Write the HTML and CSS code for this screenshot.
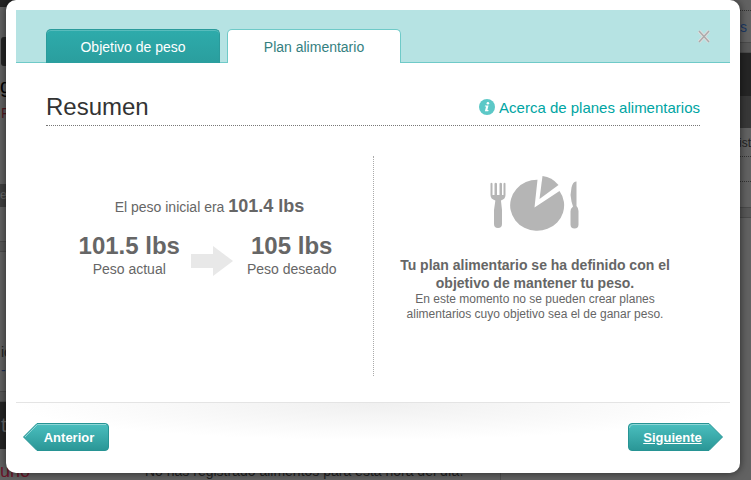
FILE: index.html
```html
<!DOCTYPE html>
<html lang="es">

<head>
    <meta charset="UTF-8">
    <meta name="viewport" content="width=device-width, initial-scale=1.0">
    <title>Plan alimentario</title>
    <link rel="stylesheet" href="styles.css">
</head>

<body>
    <!-- page behind the dialog -->
    <div class="page">
        <div class="page-main">
            <div class="row topbar"></div>
            <div class="row profile">
                <div class="photo"></div>
                <div class="name">g</div>
                <div class="food">F</div>
            </div>
            <div class="row subnav">eg</div>
            <div class="row strip"></div>
            <div class="row gap"></div>
            <div class="row panel">
                <div>ic</div>
                <a href="#">-</a>
            </div>
            <div class="row gap"></div>
            <div class="row titlebar">t</div>
            <div class="row meal">
                <span class="meal-name">uno</span>
                <span>No has registrado alimentos para esta hora del día.</span>
            </div>
        </div>
        <div class="page-side">
            <div class="row dotted side-top"></div>
            <div class="row side-link"><a href="#">s</a></div>
            <div class="row gap"></div>
            <div class="row side-dark"></div>
            <div class="row side-box"></div>
            <div class="row dotted side-text">ist</div>
            <div class="row dotted side-item"></div>
            <div class="row side-item"></div>
            <div class="row gap"></div>
        </div>
    </div>

    <div class="overlay">
        <div class="modal" role="dialog" aria-label="Plan alimentario">
            <div class="modal-header">
                <button class="tab" type="button">Objetivo de peso</button>
                <button class="tab active" type="button">Plan alimentario</button>
                <button class="close" type="button" aria-label="Cerrar">
                    <svg width="12" height="13" viewBox="0 0 12 13">
                        <path d="M1 1L11 12M11 1L1 12" stroke="#e6dcdc" stroke-width="3" />
                        <path d="M1 1L11 12M11 1L1 12" stroke="#aaa" stroke-width="1.4" />
                    </svg>
                </button>
            </div>

            <div class="content">
                <div class="heading">
                    <h1>Resumen</h1>
                    <a class="about" href="#">
                        <svg width="16" height="16" viewBox="0 0 16 16">
                            <circle cx="8" cy="8" r="8" fill="#5cc8c7" />
                            <circle cx="8.9" cy="4.3" r="1.3" fill="#fff" />
                            <path d="M6 6.500h3.500L8.400 11h1.200l-.4 1.200H5.900L7.100 7.600H5.800z" fill="#fff" />
                        </svg>
                        Acerca de planes alimentarios
                    </a>
                </div>

                <div class="summary">
                    <div class="weight">
                        <p class="initial">El peso inicial era <strong>101.4 lbs</strong></p>
                        <div class="compare">
                            <div class="value">
                                <strong>101.5 lbs</strong>
                                <span>Peso actual</span>
                            </div>
                            <svg class="arrow" width="42" height="30" viewBox="0 0 42 30">
                                <path d="M0 8h22V0l20 15-20 15v-8H0z" fill="#e8e8e8" />
                            </svg>
                            <div class="value">
                                <strong>105 lbs</strong>
                                <span>Peso deseado</span>
                            </div>
                        </div>
                    </div>
                    <div class="plan">
                        <svg class="plate" width="90" height="56" viewBox="0 0 90 56" fill="#b5b5b5">
                            <path d="M.5 7.5q1-1.5 2 0V19h2V7.5q1.200-1.500 2.500 0V19h2.500V7.500q1.200-1.500 2.500 0V19h1.500V7.500q1.200-1.500 2 0V19q0 4-4.500 5.500V25L12 34v14q0 4-4 4t-4-4V34l1.300-9v-.5Q.5 23 .5 19z" />
                            <path d="M47.500 3.800A27 25.500 0 1 0 69.500 15L44.500 31.500z" />
                            <path d="M52.500 0Q62 1 68.500 9L49.500 23z" />
                            <path d="M86.500 5.500q-3.500-.5-5 6-1.800 7 0 14l1.500 5q-2.500 2-2.500 5v13q0 4 4 4t4-4V35q0-3-2-5z" />
                        </svg>
                        <p class="plan-title">Tu plan alimentario se ha definido con el objetivo de mantener tu peso.</p>
                        <p class="plan-note">En este momento no se pueden crear planes alimentarios cuyo objetivo sea el de ganar peso.</p>
                    </div>
                </div>
            </div>

            <div class="modal-footer">
                <button class="nav prev" type="button">
                    <svg width="86" height="28" viewBox="0 0 86 28">
                        <defs>
                            <linearGradient id="teal" x1="0" y1="0" x2="0" y2="1">
                                <stop offset="0" stop-color="#4bbfbf" />
                                <stop offset="1" stop-color="#2a9696" />
                            </linearGradient>
                        </defs>
                        <path d="M.5 14L14 .5H82a3.500 3.500 0 0 1 3.500 3.500V24a3.500 3.500 0 0 1-3.500 3.500H14z" fill="url(#teal)" stroke="#279494" />
                        <path d="M2 14L14.500 1.500H83" fill="none" stroke="#8fd6d6" />
                    </svg>
                    <span>Anterior</span>
                </button>
                <button class="nav next" type="button">
                    <svg width="95" height="28" viewBox="0 0 95 28">
                        <path d="M94.500 14L81 .5H4A3.500 3.500 0 0 0 .5 4V24A3.500 3.500 0 0 0 4 27.500H81z" fill="url(#teal)" stroke="#279494" />
                        <path d="M1.500 5Q1.500 1.500 5 1.500H81" fill="none" stroke="#8fd6d6" />
                    </svg>
                    <span>Siguiente</span>
                </button>
            </div>
        </div>
    </div>
</body>

</html>
```
FILE: styles.css
```css
* {
    box-sizing: border-box;
}

body {
    margin: 0;
    min-height: 100vh;
    position: relative;
    overflow: hidden;
    background-color: #626262;
    color: #666;
    font-family: "Liberation Sans", Arial, sans-serif;
    font-size: 14px;
}

h1,
p {
    margin: 0;
}

button {
    padding: 0;
    border: none;
    background: none;
    font-family: inherit;
    cursor: pointer;
}

a {
    text-decoration: none;
}

/* page behind */
.page {
    display: flex;
    height: 100vh;
    overflow: hidden;
    color: #222;
}

.page-main {
    flex: 2;
    border-right: 1px solid #505050;
}

.page-side {
    flex: 1;
    background-color: #626262;
    text-align: right;
}

.row {
    overflow: hidden;
}

.gap {
    height: 11px;
    background-color: #585858;
    border-top: 1px solid #4b4b4b;
    border-bottom: 1px solid #4b4b4b;
}

.dotted {
    border-bottom: 1px dotted #333;
}

.topbar {
    height: 7px;
    background-color: #252525;
}

.profile {
    height: 177px;
    padding-top: 30px;
}

.photo {
    width: 60px;
    height: 29px;
    margin-left: 1px;
    border-radius: 3px;
    background-color: #252525;
}

.name {
    margin-top: 6px;
    color: #000;
    font-size: 20px;
    line-height: 28px;
}

.food {
    margin-top: 4px;
    padding-left: 1px;
    color: #501820;
    line-height: 18px;
}

.subnav {
    height: 23px;
    background-color: #404040;
    color: #686868;
    font-size: 12px;
    line-height: 22px;
}

.strip {
    height: 34px;
}

.panel {
    height: 139px;
    padding: 91px 0 0 1px;
    line-height: 18px;
}

.panel a {
    display: block;
    color: #1c2f55;
}

.titlebar {
    height: 47px;
    background-color: #252525;
    color: #666;
    font-size: 20px;
    line-height: 47px;
    padding-left: 1px;
}

.meal {
    display: flex;
    padding-top: 13px;
    line-height: 18px;
}

.meal-name {
    width: 145px;
    color: #6b1428;
    font-size: 18px;
}

.side-top {
    height: 11px;
}

.side-link {
    height: 31px;
    padding-right: 4px;
    line-height: 32px;
}

.side-link a {
    color: #1c3a68;
}

.side-dark {
    height: 43px;
    background-color: #252525;
}

.side-box {
    height: 32px;
    background-color: #383838;
}

.side-text {
    height: 29px;
    font-size: 12px;
    line-height: 30px;
}

.side-item {
    height: 25px;
}

/* dialog */
.overlay {
    position: absolute;
    inset: 0;
    padding: 0 11px 0 6px;
}

.modal {
    padding: 10px 10px 22px;
    border-radius: 10px;
    background-color: #fff;
    box-shadow: 0 0 8px rgba(0, 0, 0, 0.6);
}

.modal-header {
    display: flex;
    align-items: flex-end;
    gap: 7px;
    height: 53px;
    padding: 0 20px 0 30px;
    background-color: #b6e3e3;
    box-shadow: inset 0 -1px #6fcac8;
}

.tab {
    width: 174px;
    height: 34px;
    border: 1px solid #2a9b9b;
    border-bottom: none;
    border-radius: 5px 5px 0 0;
    background: linear-gradient(#2eabab, #2a9e9e);
    box-shadow: inset 0 1px #58bcbc;
    color: #fff;
    font-size: 14px;
}

.tab.active {
    border-color: #6fcac8;
    background: #fff;
    box-shadow: none;
    color: #35807f;
}

.close {
    align-self: center;
    height: 13px;
    margin-left: auto;
}

.close svg {
    display: block;
}

.content {
    padding: 29px 30px 26px;
}

.heading {
    display: flex;
    justify-content: space-between;
    align-items: center;
    height: 34px;
    padding-bottom: 3px;
    border-bottom: 1px dotted #777;
}

h1 {
    color: #333;
    font-size: 24px;
    font-weight: normal;
}

.about {
    display: flex;
    align-items: center;
    gap: 4px;
    color: #00a5a3;
    font-size: 15px;
}

.summary {
    display: grid;
    grid-template-columns: 1fr 1fr;
    height: 220px;
    margin-top: 30px;
}

.weight {
    padding-top: 38px;
    text-align: center;
}

.initial {
    line-height: 24px;
}

.initial strong {
    font-size: 18px;
}

.compare {
    display: flex;
    justify-content: center;
    margin-top: 13px;
    padding-right: 4px;
}

.value strong,
.value span {
    display: block;
}

.value strong {
    font-size: 24px;
    line-height: 28px;
}

.value span {
    line-height: 18px;
}

.arrow {
    margin: 14px 14px 0 11px;
}

.plan {
    padding: 20px 24px 0 20px;
    border-left: 1px dotted #aaa;
    text-align: center;
}

.plate {
    display: block;
    margin: 0 auto 24px;
}

.plan-title {
    font-weight: bold;
    line-height: 18px;
}

.plan-note {
    font-size: 12px;
    line-height: 15px;
}

.modal-footer {
    display: flex;
    justify-content: space-between;
    padding: 20px 7px 0;
    border-top: 1px solid #e4e4e4;
    background: radial-gradient(ellipse 50% 36px at 50% 1px, #f0f0f0, #fff) no-repeat;
}

.nav {
    position: relative;
    height: 28px;
    color: #fff;
    font-size: 13px;
    font-weight: bold;
}

.nav svg {
    position: absolute;
    top: 0;
    left: 0;
}

.nav span {
    position: relative;
}

.prev {
    width: 86px;
    padding-left: 6px;
}

.next {
    width: 95px;
    padding-right: 6px;
    text-decoration: underline;
}
```
